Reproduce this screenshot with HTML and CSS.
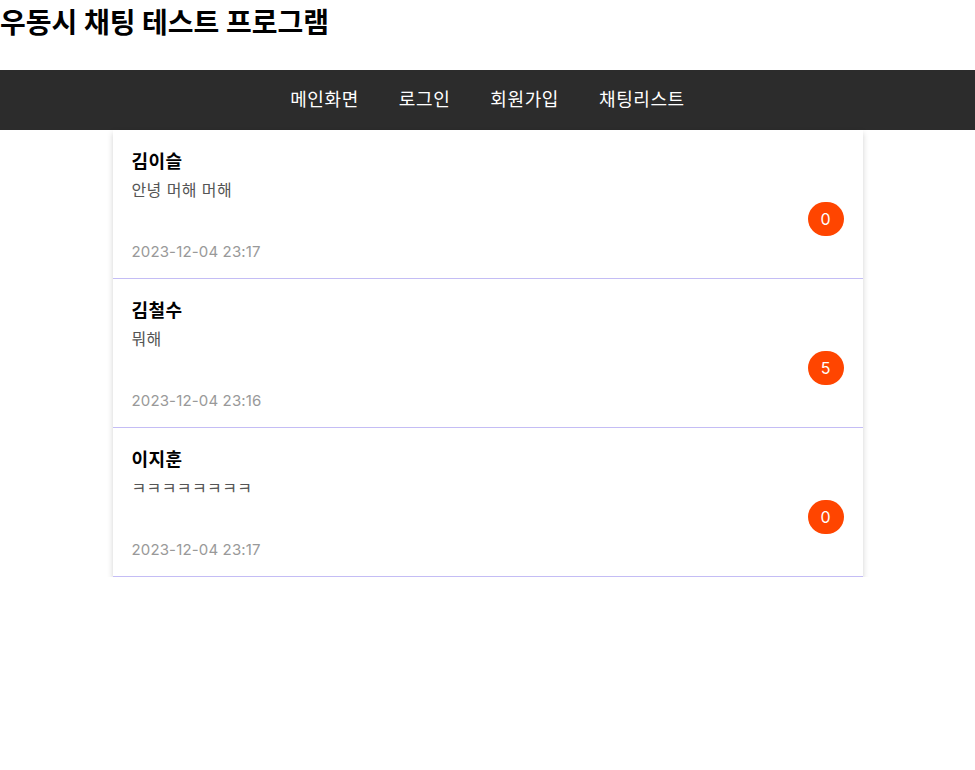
FILE: index.html
```html
<!DOCTYPE html>
<html lang="ko">
<head>
  <meta charset="UTF-8" />
  <meta name="viewport" content="width=device-width, initial-scale=1.0"/>
  <title>우동시 채팅 테스트 프로그램</title>
  <link rel="stylesheet" href="styles.css">
</head>
<body>
  <h1 class="title">우동시 채팅 테스트 프로그램</h1>

  <!-- 상단 메뉴 -->
  <nav class="nav">
    <a href="#" class="nav-link">메인화면</a>
    <a href="#" class="nav-link">로그인</a>
    <a href="#" class="nav-link">회원가입</a>
    <a href="#" class="nav-link">채팅리스트</a>
  </nav>

  <!-- 채팅방 목록 -->
  <ul class="chat-list">
    <li class="chat-item">
      <div class="chat-name">김이슬</div>
      <div class="chat-msg">안녕 머해 머해</div>
      <div class="chat-badge-row"><span class="badge">0</span></div>
      <div class="chat-date">2023-12-04 23:17</div>
    </li>
    <li class="chat-item">
      <div class="chat-name">김철수</div>
      <div class="chat-msg">뭐해</div>
      <div class="chat-badge-row"><span class="badge">5</span></div>
      <div class="chat-date">2023-12-04 23:16</div>
    </li>
    <li class="chat-item">
      <div class="chat-name">이지훈</div>
      <div class="chat-msg">ㅋㅋㅋㅋㅋㅋㅋㅋ</div>
      <div class="chat-badge-row"><span class="badge">0</span></div>
      <div class="chat-date">2023-12-04 23:17</div>
    </li>
  </ul>
</body>
</html>
```

FILE: styles.css
```css
* {
  margin: 0;
  padding: 0;
  box-sizing: border-box;
}

body {
  font-family: 'Inter', 'Noto Sans CJK KR', sans-serif;
  color: #000;
  background: #fff;
}

.title {
  font-size: 28px;
  font-weight: 700;
  line-height: 46px;
  margin-bottom: 24px;
}

.nav {
  height: 60px;
  padding-bottom: 4px;
  background: #2c2c2c;
  display: flex;
  justify-content: center;
  align-items: center;
  gap: 40px;
}

.nav-link {
  color: #fff;
  text-decoration: none;
  font-size: 18px;
  letter-spacing: 0.6px;
}

.chat-list {
  list-style: none;
  width: 750px;
  margin: 0 auto;
  box-shadow: 0 3px 6px rgba(0, 0, 0, 0.18);
}

.chat-item {
  padding: 19px 19px 15px;
  border-bottom: 1px solid #c4bdf5;
  display: flex;
  flex-direction: column;
}

.chat-name {
  font-size: 18px;
  font-weight: 700;
  line-height: 26px;
  letter-spacing: 0.5px;
}

.chat-msg {
  font-size: 16px;
  color: #555;
  line-height: 24px;
  letter-spacing: 0.4px;
  margin-top: 3px;
}

.chat-badge-row {
  display: flex;
  justify-content: flex-end;
}

.badge {
  min-width: 36px;
  height: 34px;
  padding: 0 10px;
  border-radius: 17px;
  background: #ff4500;
  color: #fff;
  font-size: 16px;
  display: flex;
  align-items: center;
  justify-content: center;
}

.chat-date {
  font-size: 15px;
  color: #999;
  line-height: 22px;
  letter-spacing: 0.15px;
  margin-top: 5px;
}
```
